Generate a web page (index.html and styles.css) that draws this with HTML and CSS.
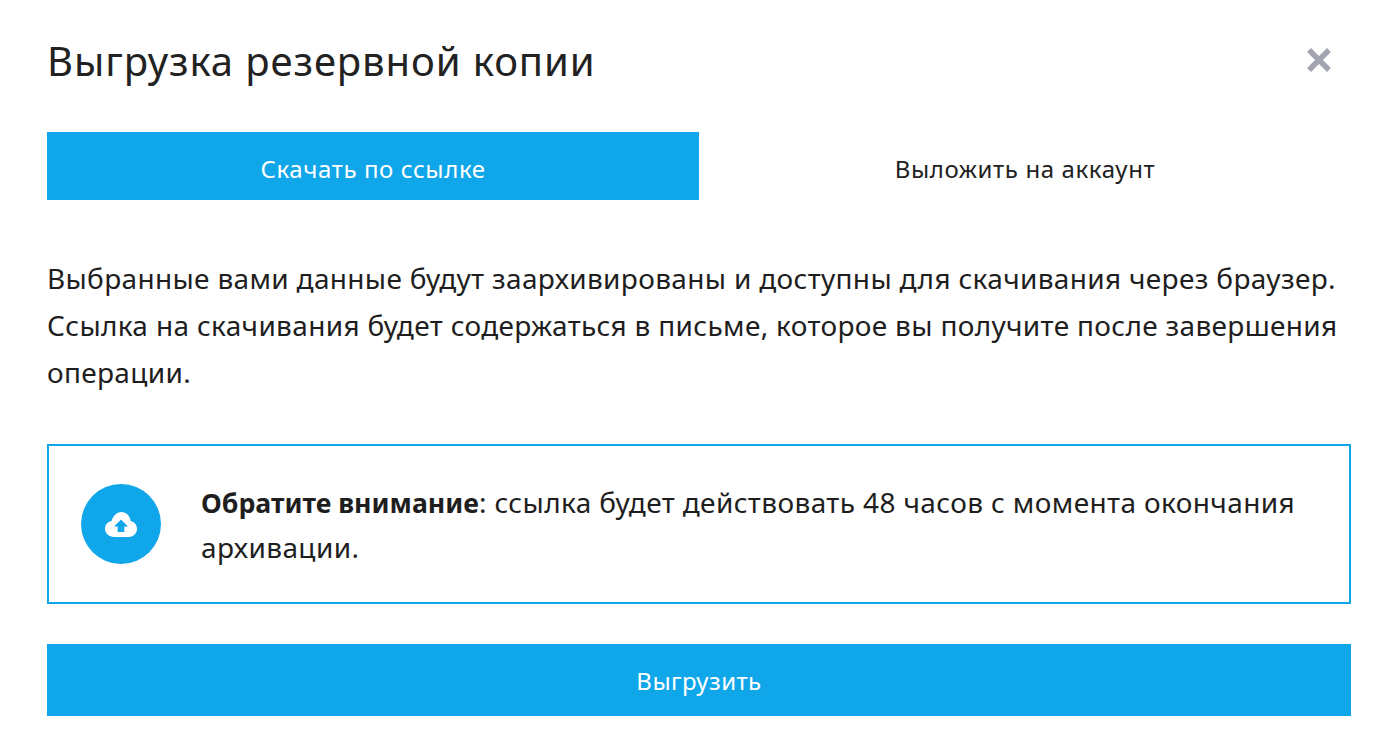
FILE: index.html
```html
<!DOCTYPE html>
<html lang="ru">
<head>
<meta charset="utf-8">
<title>Выгрузка резервной копии</title>
<link rel="stylesheet" href="styles.css">
</head>
<body>
<main class="modal">
  <header class="modal-head">
    <h1 class="modal-title">Выгрузка резервной копии</h1>
    <button class="close" aria-label="Закрыть">
      <svg width="26" height="26" viewBox="0 0 26 26"><path d="M3 3L23 23M23 3L3 23" stroke="#a3a5b1" stroke-width="5.5" fill="none"/></svg>
    </button>
  </header>
  <div class="tabs">
    <div class="tab tab-active">Скачать по ссылке</div>
    <div class="tab">Выложить на аккаунт</div>
  </div>
  <p class="desc">Выбранные вами данные будут заархивированы и доступны для скачивания через браузер. Ссылка на скачивания будет содержаться в письме, которое вы получите после завершения операции.</p>
  <div class="notice">
    <div class="notice-icon">
      <svg width="32" height="25" viewBox="0 0 32 25"><path d="M9 25C4 25 0 21.4 0 16.8C0 12.8 2.8 9.6 6.6 9C8 4 11.6 0 16.3 0C21.3 0 25 3.8 25.6 9C29.4 9.8 32 12.8 32 16.8C32 21.4 28.4 25 24 25Z" fill="#fff"/><path d="M16 7.5L23 14.5H19.3V20H12.7V14.5H9Z" fill="#10a6ea"/></svg>
    </div>
    <p class="notice-text"><strong>Обратите внимание</strong>: ссылка будет действовать 48 часов с момента окончания архивации.</p>
  </div>
  <button class="submit">Выгрузить</button>
</main>
</body>
</html>
```
FILE: styles.css
```css
* { box-sizing: border-box; }
html, body { margin: 0; padding: 0; background: #fff; }
body { font-family: "Noto Sans", "Open Sans", sans-serif; color: #1e1e1e; overflow: hidden; }
.modal { width: 1396px; height: 744px; padding: 0 45px 0 47px; }
.modal-head { height: 132px; display: flex; justify-content: space-between; align-items: flex-start; }
.modal-title { margin: 35px 0 0; font-size: 40px; line-height: 52px; font-weight: 400; letter-spacing: 0.92px; color: #222; }
.close { margin: 47px 19px 0 0; padding: 0; border: 0; background: none; width: 26px; height: 26px; }
.close svg { display: block; }
.tabs { display: flex; height: 68px; }
.tab { flex: 1; display: flex; align-items: center; justify-content: center; padding-top: 5px; font-size: 24px; letter-spacing: 0.6px; color: #222; }
.tab-active { background: #10a6ea; color: #fff; }
.desc { margin: 55px 0 0; font-size: 28px; line-height: 47px; letter-spacing: 0.33px; }
.notice { margin-top: 48px; height: 160px; border: 2px solid #10a6ea; display: flex; align-items: center; padding: 0 32px; gap: 40px; }
.notice-icon { flex: none; width: 80px; height: 80px; border-radius: 50%; background: #10a6ea; display: flex; align-items: center; justify-content: center; }
.notice-text { margin: 0; padding-top: 2px; font-size: 28px; line-height: 45px; letter-spacing: 0.38px; }
.notice-text strong { font-size: 26.7px; font-weight: 700; letter-spacing: 0; }
.submit { display: block; width: 100%; height: 72px; margin-top: 40px; padding: 0; border: 0; background: #10a6ea; color: #fff; font: inherit; font-size: 24px; letter-spacing: 0.45px; }
```
